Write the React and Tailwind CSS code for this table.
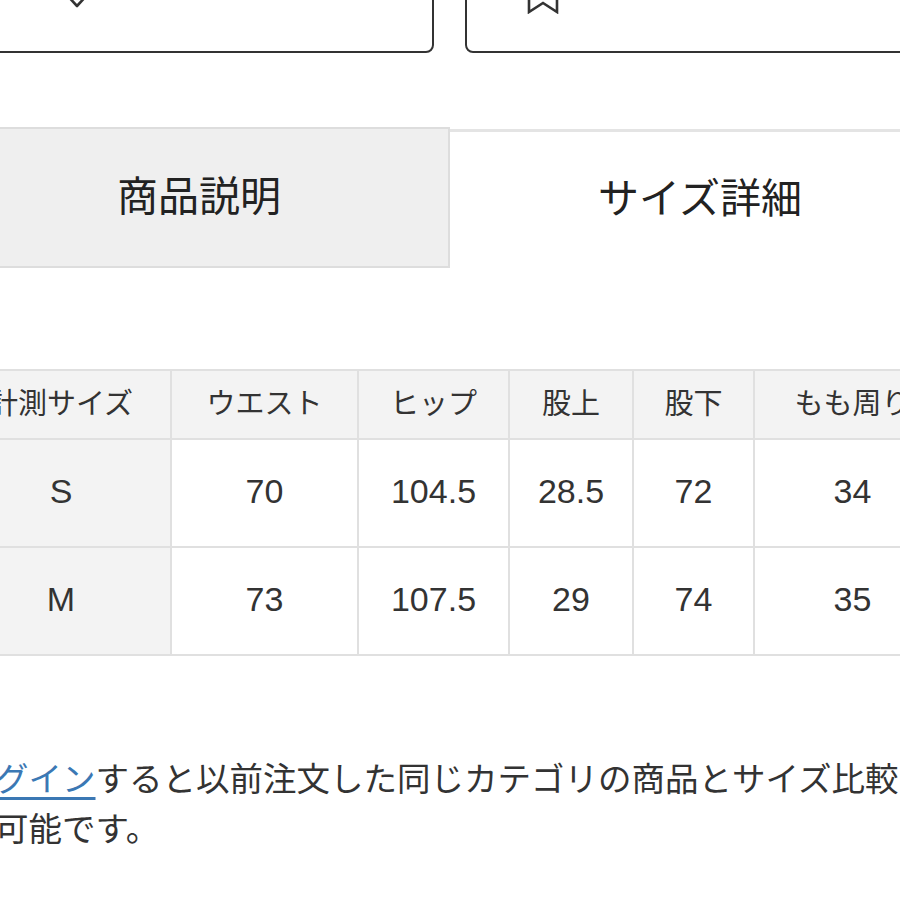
import React from 'react'

const jp = { fontFamily: '"Liberation Sans", "Noto Sans CJK JP", sans-serif' }

const headers = ['計測サイズ', 'ウエスト', 'ヒップ', '股上', '股下', 'もも周り']
const rows = [
  ['S', '70', '104.5', '28.5', '72', '34'],
  ['M', '73', '107.5', '29', '74', '35'],
]
const widths = ['w-[220px]', 'w-[187px]', 'w-[151px]', 'w-[124px]', 'w-[121px]', 'w-[197px]']

function Heart() {
  return (
    <svg width="30" height="34" viewBox="0 0 30 34" fill="none" stroke="#333" strokeWidth="2.6" strokeLinejoin="round">
      <path d="M15 31 L3 18 C-1 13 1 5 8 5 C11 5 13.5 7 15 9.5 C16.5 7 19 5 22 5 C29 5 31 13 27 18 Z" />
    </svg>
  )
}

function Bookmark() {
  return (
    <svg width="32" height="40" viewBox="0 0 32 40" fill="none" stroke="#333" strokeWidth="2.6" strokeLinejoin="miter">
      <path d="M2 2 H30 V38 L16 29 L2 38 Z" />
    </svg>
  )
}

export default function App() {
  return (
    <div className="w-[900px] h-[900px] overflow-hidden bg-white text-[#333]" style={jp}>
      <div className="w-[1000px] -ml-[50px]">
        {/* action buttons, tops cut off */}
        <div className="flex gap-[31px] -mt-[57px]">
          <div className="w-[484px] h-[110px] border-2 border-[#333] rounded-[8px] flex items-start gap-[92px] pt-[30px] pl-[110px]">
            <Heart />
            <span className="text-[26px] leading-[30px] -mt-[8px]">お気に入り登録</span>
          </div>
          <div className="flex-1 h-[110px] border-2 border-[#333] rounded-[8px] flex items-start gap-[10px] pt-[29px] pl-[60px]">
            <Bookmark />
            <span className="text-[26px] leading-[30px] -mt-[8px]">あとで買うに追加する</span>
          </div>
        </div>

        {/* tabs */}
        <div className="flex mt-[74px]">
          <div className="w-[500px] h-[141px] bg-[#efefef] border-t-2 border-b-2 border-r-2 border-[#dddddd] flex items-center justify-center text-[41px] text-[#222]">
            商品説明
          </div>
          <div className="flex-1 h-[139px] mt-[2px] bg-white border-t-[3px] border-[#e4e4e4] flex items-center justify-center text-[41px] text-[#222]">
            サイズ詳細
          </div>
        </div>

        {/* size table */}
        <table className="table-fixed w-[1000px] border-collapse mt-[101px]">
          <thead>
            <tr className="h-[69px] bg-[#f3f3f3]">
              {headers.map((h, i) => (
                <th key={i} className={`${widths[i]} border-2 border-[#e0e0e0] font-normal text-[29px] text-center whitespace-nowrap`}>
                  {h}
                </th>
              ))}
            </tr>
          </thead>
          <tbody>
            {rows.map((r, ri) => (
              <tr key={ri} className="h-[108px]">
                {r.map((c, ci) => (
                  <td key={ci} className={`border-2 border-[#e0e0e0] text-center text-[34px] leading-[40px] pb-[4px] ${ci === 0 ? 'bg-[#f3f3f3]' : 'bg-white'}`}>
                    {c}
                  </td>
                ))}
              </tr>
            ))}
          </tbody>
        </table>

        {/* note */}
        <p className="mt-[99px] ml-[45px] text-[33.5px] leading-[50px] -indent-[33.5px] w-[945px] text-[#333]">
          <a href="#" className="text-[#3b78b4] underline underline-offset-[6px]">ログイン</a>
          すると以前注文した同じカテゴリの商品とサイズ比較が可能です。
        </p>
      </div>
    </div>
  )
}
